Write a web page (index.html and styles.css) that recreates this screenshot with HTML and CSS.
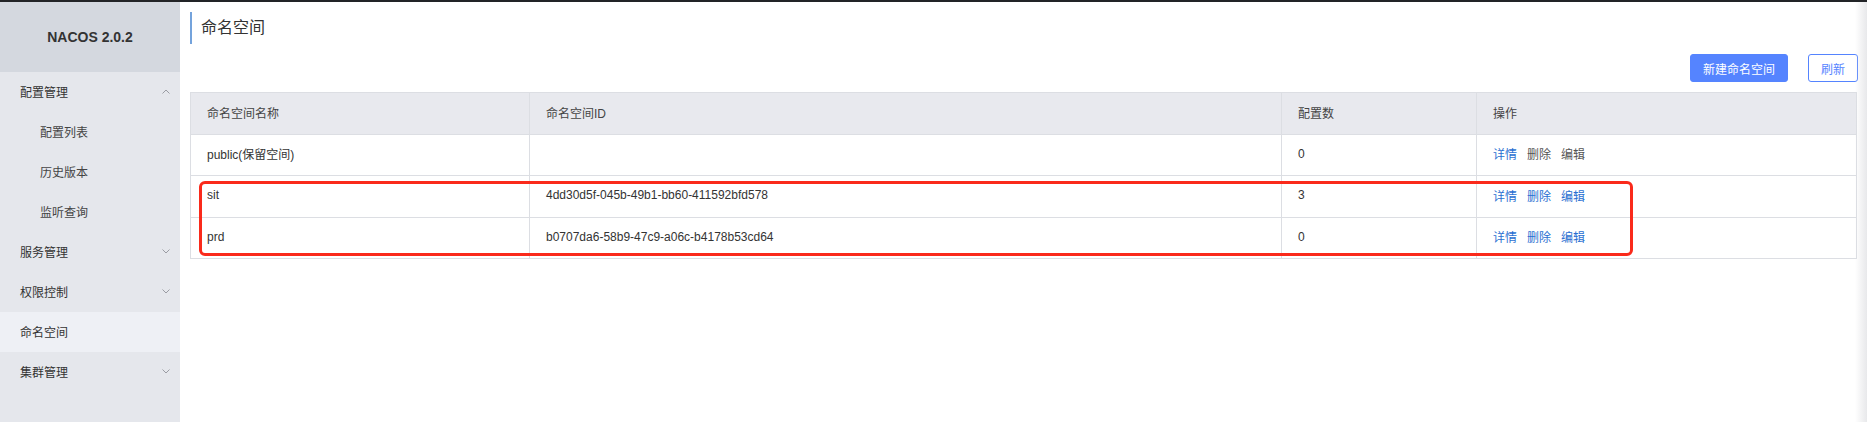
FILE: index.html
```html
<!DOCTYPE html>
<html lang="zh-CN">
<head>
<meta charset="utf-8">
<title>命名空间 - NACOS 2.0.2</title>
<link rel="stylesheet" href="styles.css">
</head>
<body>
<div class="topline"></div>
<div class="app">
  <aside class="sidebar">
    <div class="brand">NACOS 2.0.2</div>
    <nav class="menu">
      <div class="menu-item">
        <span>配置管理</span>
        <svg class="chev" width="8" height="5" viewBox="0 0 8 5"><polyline points="0.5,4.5 4,1 7.5,4.5" fill="none" stroke="#9a9ca3" stroke-width="1"/></svg>
      </div>
      <div class="menu-item sub">配置列表</div>
      <div class="menu-item sub">历史版本</div>
      <div class="menu-item sub">监听查询</div>
      <div class="menu-item">
        <span>服务管理</span>
        <svg class="chev" width="8" height="5" viewBox="0 0 8 5"><polyline points="0.5,0.5 4,4 7.5,0.5" fill="none" stroke="#9a9ca3" stroke-width="1"/></svg>
      </div>
      <div class="menu-item">
        <span>权限控制</span>
        <svg class="chev" width="8" height="5" viewBox="0 0 8 5"><polyline points="0.5,0.5 4,4 7.5,0.5" fill="none" stroke="#9a9ca3" stroke-width="1"/></svg>
      </div>
      <div class="menu-item active">命名空间</div>
      <div class="menu-item">
        <span>集群管理</span>
        <svg class="chev" width="8" height="5" viewBox="0 0 8 5"><polyline points="0.5,0.5 4,4 7.5,0.5" fill="none" stroke="#9a9ca3" stroke-width="1"/></svg>
      </div>
    </nav>
  </aside>
  <main class="main">
    <h1 class="page-title">命名空间</h1>
    <div class="toolbar">
      <button class="btn btn-primary">新建命名空间</button>
      <button class="btn btn-normal">刷新</button>
    </div>
    <div class="table-wrap">
      <table class="ns-table">
        <colgroup>
          <col class="c1"><col class="c2"><col class="c3"><col class="c4">
        </colgroup>
        <thead>
          <tr><th>命名空间名称</th><th>命名空间ID</th><th>配置数</th><th>操作</th></tr>
        </thead>
        <tbody>
          <tr>
            <td>public(保留空间)</td><td></td><td>0</td>
            <td><a class="op">详情</a><a class="op disabled">删除</a><a class="op disabled">编辑</a></td>
          </tr>
          <tr>
            <td>sit</td><td>4dd30d5f-045b-49b1-bb60-411592bfd578</td><td>3</td>
            <td><a class="op">详情</a><a class="op">删除</a><a class="op">编辑</a></td>
          </tr>
          <tr>
            <td>prd</td><td>b0707da6-58b9-47c9-a06c-b4178b53cd64</td><td>0</td>
            <td><a class="op">详情</a><a class="op">删除</a><a class="op">编辑</a></td>
          </tr>
        </tbody>
      </table>
      <div class="highlight"></div>
    </div>
  </main>
</div>
<div class="edge-shade"></div>
</body>
</html>
```

FILE: styles.css
```css
* { box-sizing: border-box; }
html, body { margin: 0; padding: 0; }
body {
  width: 1867px;
  height: 422px;
  overflow: hidden;
  background: #ffffff;
  font-family: "Liberation Sans", "Noto Sans CJK SC", sans-serif;
  color: #333;
  position: relative;
}
.topline { height: 2px; background: #222427; }
.app { display: flex; height: 420px; }

.sidebar {
  width: 180px;
  flex: 0 0 180px;
  background: #e5e7ec;
  display: flex;
  flex-direction: column;
}
.brand {
  height: 70px;
  background: #d4d8df;
  display: flex;
  align-items: center;
  justify-content: center;
  font-weight: bold;
  font-size: 14px;
  color: #333;
}
.menu { display: flex; flex-direction: column; }
.menu-item {
  height: 40px;
  display: flex;
  align-items: center;
  justify-content: space-between;
  padding: 0 10px 1px 20px;
  font-size: 12px;
  color: #333;
}
.menu-item.sub { padding-left: 40px; color: #444; }
.menu-item.active { background: #eef0f5; }
.chev { display: block; }

.main {
  flex: 1;
  padding: 10px 10px 0 10px;
  display: flex;
  flex-direction: column;
}
.page-title {
  margin: 0;
  height: 32px;
  line-height: 32px;
  border-left: 2px solid #74a3dc;
  padding-left: 9px;
  font-size: 16px;
  font-weight: normal;
  color: #333;
}
.toolbar {
  margin-top: 10px;
  display: flex;
  justify-content: flex-end;
  gap: 20px;
}
.btn {
  height: 28px;
  font-family: inherit;
  font-size: 12px;
  border-radius: 3px;
  padding: 0 12px;
  cursor: pointer;
}
.btn-primary {
  width: 98px;
  background: #5584ff;
  border: 1px solid #5584ff;
  color: #fff;
}
.btn-normal {
  width: 50px;
  background: #fff;
  border: 1px solid #5584ff;
  color: #5584ff;
  margin-right: -1px;
}

.table-wrap { position: relative; margin-top: 10px; }
.ns-table {
  width: 100%;
  border-collapse: collapse;
  table-layout: fixed;
  font-size: 12px;
  border: 1px solid #dcdee3;
}
.ns-table col.c1 { width: 339px; }
.ns-table col.c2 { width: 752px; }
.ns-table col.c3 { width: 195px; }
.ns-table col.c4 { width: auto; }
.ns-table tr { height: 41.5px; }
.ns-table th, .ns-table td {
  padding: 0 16px 2px 16px;
  text-align: left;
  border: 1px solid #dcdee3;
  color: #333;
  font-weight: normal;
}
.ns-table th { background: #e8e9ee; color: #444; }
.op { color: #2a6fd1; margin-right: 10px; text-decoration: none; }
.op.disabled { color: #555; }

.highlight {
  position: absolute;
  left: 9px;
  top: 89px;
  width: 1434px;
  height: 75px;
  border: 3px solid #fa2a1b;
  border-radius: 6px;
  pointer-events: none;
}
.edge-shade {
  position: absolute;
  right: 0;
  top: 2px;
  width: 12px;
  height: 420px;
  background: linear-gradient(to right, rgba(230,230,232,0), rgba(222,223,226,0.7));
  pointer-events: none;
}
```
